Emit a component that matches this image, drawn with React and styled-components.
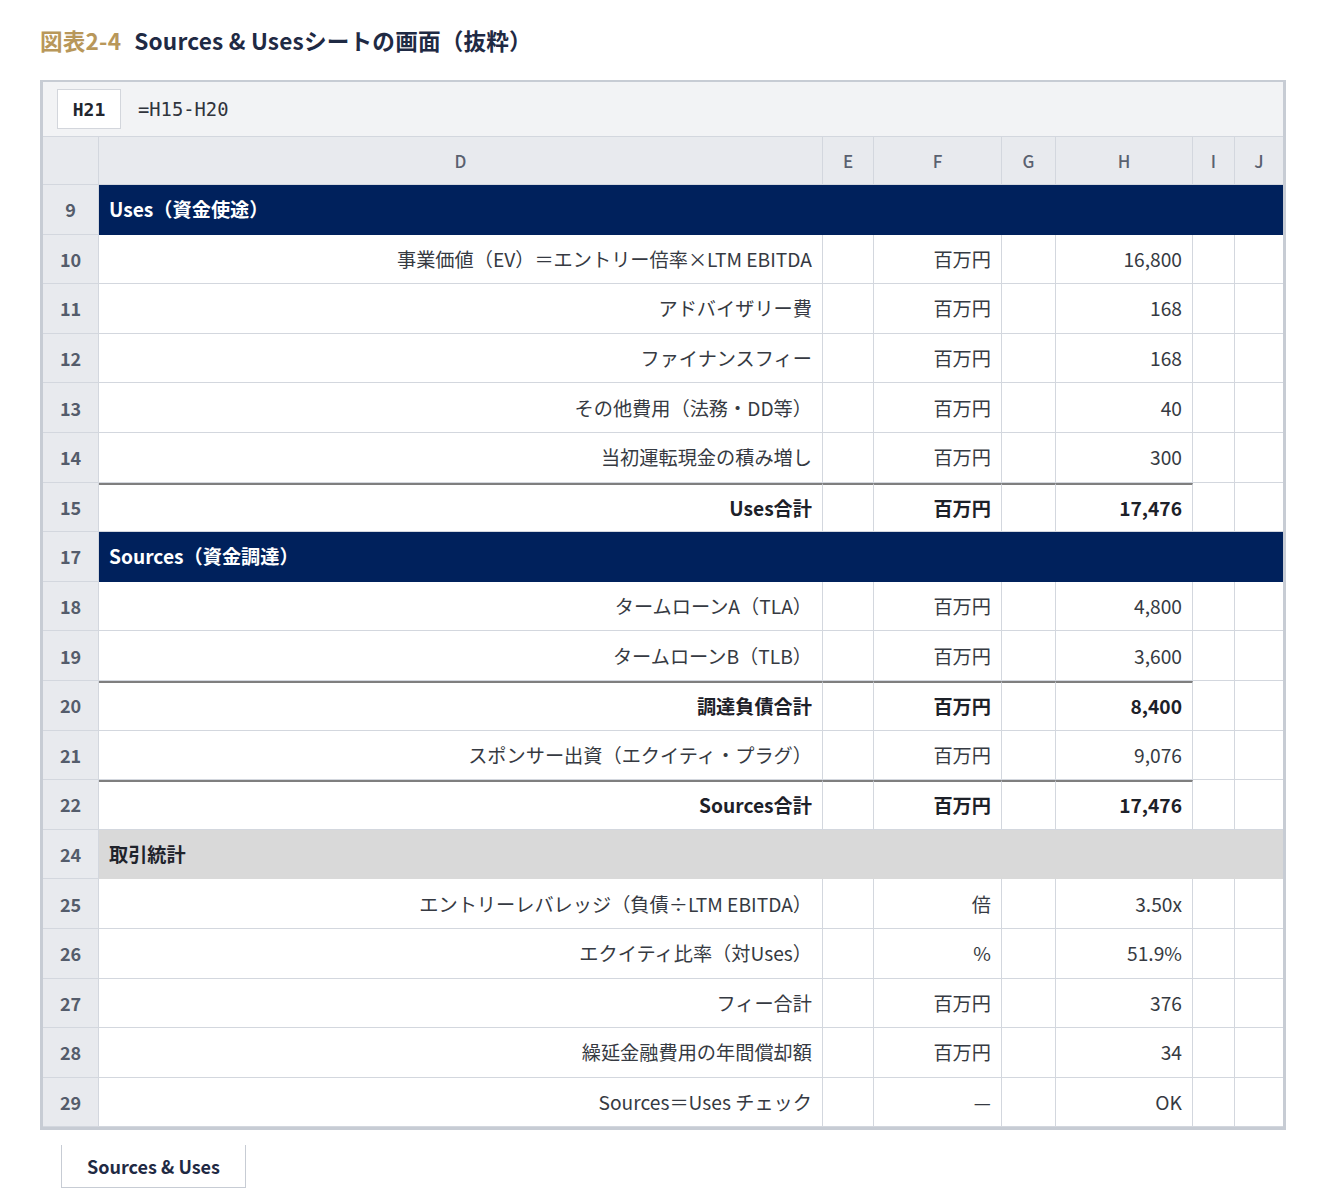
import React from "react";
import styled, { createGlobalStyle } from "styled-components";

const GlobalStyle = createGlobalStyle`
  body {
    margin: 0;
    background: #ffffff;
    font-family: "Noto Sans CJK JP", "Noto Sans", sans-serif;
    color: #333840;
  }
`;

const COLS = "56px 724px 51px 128px 54px 137px 42px 48px";
const LINE = "#d3d7de";

const Page = styled.div`
  padding: 24px 40px 10px 40px;
  width: 1246px;
`;

const Title = styled.h2`
  margin: 0 0 22px 0;
  font-size: 22.6px;
  font-weight: 700;
  color: #1f2a44;
  line-height: 34px;
  letter-spacing: 0.2px;
`;

const Fig = styled.span`
  color: #b8975a;
  margin-right: 13px;
`;

const Frame = styled.div`
  border: 3px solid #c7ccd4;
  border-top-width: 2px;
  background: #ffffff;
`;

const FormulaBar = styled.div`
  display: flex;
  align-items: center;
  gap: 17px;
  height: 54px;
  padding: 0 14px;
  background: #f2f3f5;
  border-bottom: 1px solid ${LINE};
`;

const CellRef = styled.div`
  width: 62px;
  height: 38px;
  display: flex;
  align-items: center;
  justify-content: center;
  background: #ffffff;
  border: 1px solid #d3d6dc;
  font-family: "DejaVu Sans Mono", "Liberation Mono", monospace;
  font-weight: 700;
  font-size: 18px;
  color: #22262e;
`;

const Formula = styled.div`
  font-family: "DejaVu Sans Mono", "Liberation Mono", monospace;
  font-size: 18.8px;
  color: #30343c;
`;

const Row = styled.div`
  display: grid;
  grid-template-columns: ${COLS};
  height: ${(p) => p.h || "49.6px"};
`;

const HeadCell = styled.div`
  display: flex;
  align-items: center;
  justify-content: center;
  background: #e8eaee;
  border-right: 1px solid ${LINE};
  border-bottom: 1px solid ${LINE};
  font-size: 17px;
  font-weight: 500;
  color: #5a6170;
  &:last-child {
    border-right: none;
  }
`;

const RowNum = styled.div`
  display: flex;
  align-items: center;
  justify-content: center;
  background: #e8eaee;
  border-right: 1px solid ${LINE};
  border-bottom: 1px solid ${LINE};
  font-size: 18px;
  font-weight: 700;
  color: #545c6b;
`;

const Cell = styled.div`
  display: flex;
  align-items: center;
  justify-content: flex-end;
  padding-right: 10px;
  border-right: 1px solid ${LINE};
  border-bottom: 1px solid ${LINE};
  border-top: ${(p) => (p.$top ? "2px solid #7f7f7f" : "none")};
  font-size: 19.2px;
  font-weight: ${(p) => (p.$bold ? 700 : 400)};
  color: ${(p) => (p.$bold ? "#1d2129" : "#363a42")};
  white-space: nowrap;
  &:last-child {
    border-right: none;
  }
`;

const Section = styled.div`
  grid-column: 2 / -1;
  display: flex;
  align-items: center;
  padding-left: 10px;
  background: ${(p) => (p.$grey ? "#d9d9d9" : "#00215c")};
  color: ${(p) => (p.$grey ? "#1f232b" : "#ffffff")};
  border-bottom: 1px solid ${(p) => (p.$grey ? "#d9d9d9" : "#00215c")};
  font-size: 19.2px;
  font-weight: 700;
`;

const Tabs = styled.div`
  padding-left: 21px;
  padding-top: 15px;
`;

const Tab = styled.div`
  display: inline-flex;
  align-items: center;
  justify-content: center;
  width: 183px;
  height: 42px;
  border: 1px solid #c7ccd4;
  border-top: none;
  font-size: 18px;
  font-weight: 700;
  color: #1f2a44;
`;

const rows = [
  { n: 9, section: "Uses（資金使途）" },
  { n: 10, d: "事業価値（EV）＝エントリー倍率×LTM EBITDA", f: "百万円", h: "16,800" },
  { n: 11, d: "アドバイザリー費", f: "百万円", h: "168" },
  { n: 12, d: "ファイナンスフィー", f: "百万円", h: "168" },
  { n: 13, d: "その他費用（法務・DD等）", f: "百万円", h: "40" },
  { n: 14, d: "当初運転現金の積み増し", f: "百万円", h: "300" },
  { n: 15, d: "Uses合計", f: "百万円", h: "17,476", total: true },
  { n: 17, section: "Sources（資金調達）" },
  { n: 18, d: "タームローンA（TLA）", f: "百万円", h: "4,800" },
  { n: 19, d: "タームローンB（TLB）", f: "百万円", h: "3,600" },
  { n: 20, d: "調達負債合計", f: "百万円", h: "8,400", total: true },
  { n: 21, d: "スポンサー出資（エクイティ・プラグ）", f: "百万円", h: "9,076" },
  { n: 22, d: "Sources合計", f: "百万円", h: "17,476", total: true },
  { n: 24, section: "取引統計", grey: true },
  { n: 25, d: "エントリーレバレッジ（負債÷LTM EBITDA）", f: "倍", h: "3.50x" },
  { n: 26, d: "エクイティ比率（対Uses）", f: "%", h: "51.9%" },
  { n: 27, d: "フィー合計", f: "百万円", h: "376" },
  { n: 28, d: "繰延金融費用の年間償却額", f: "百万円", h: "34" },
  { n: 29, d: "Sources＝Uses チェック", f: "—", h: "OK" },
];

function DataRow({ r }) {
  if (r.section) {
    return (
      <Row>
        <RowNum>{r.n}</RowNum>
        <Section $grey={r.grey}>{r.section}</Section>
      </Row>
    );
  }
  const t = r.total;
  return (
    <Row>
      <RowNum>{r.n}</RowNum>
      <Cell $top={t} $bold={t}>{r.d}</Cell>
      <Cell $top={t} />
      <Cell $top={t} $bold={t}>{r.f}</Cell>
      <Cell $top={t} />
      <Cell $top={t} $bold={t}>{r.h}</Cell>
      <Cell />
      <Cell />
    </Row>
  );
}

export default function App() {
  return (
    <Page>
      <GlobalStyle />
      <Title>
        <Fig>図表2-4</Fig>Sources &amp; Usesシートの画面（抜粋）
      </Title>
      <Frame>
        <FormulaBar>
          <CellRef>H21</CellRef>
          <Formula>=H15-H20</Formula>
        </FormulaBar>
        <Row h="48px">
          {["", "D", "E", "F", "G", "H", "I", "J"].map((c, i) => (
            <HeadCell key={i}>{c}</HeadCell>
          ))}
        </Row>
        {rows.map((r) => (
          <DataRow key={r.n} r={r} />
        ))}
      </Frame>
      <Tabs>
        <Tab>Sources &amp; Uses</Tab>
      </Tabs>
    </Page>
  );
}
